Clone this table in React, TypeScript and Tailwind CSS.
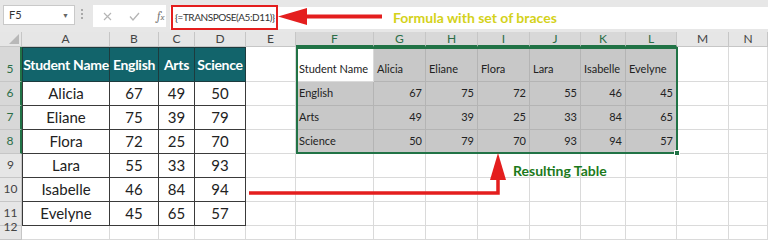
const font = { fontFamily: 'Lato, "Open Sans", sans-serif' };

const colLetters = ['A', 'B', 'C', 'D', 'E', 'F', 'G', 'H', 'I', 'J', 'K', 'L', 'M', 'N'];
const rowNums = [5, 6, 7, 8, 9, 10, 11, 12];

const students = [
  ['Alicia', '67', '49', '50'],
  ['Eliane', '75', '39', '79'],
  ['Flora', '72', '25', '70'],
  ['Lara', '55', '33', '93'],
  ['Isabelle', '46', '84', '94'],
  ['Evelyne', '45', '65', '57'],
];

const transposed = [
  ['Student Name', 'Alicia', 'Eliane', 'Flora', 'Lara', 'Isabelle', 'Evelyne'],
  ['English', '67', '75', '72', '55', '46', '45'],
  ['Arts', '49', '39', '25', '33', '84', '65'],
  ['Science', '50', '79', '70', '93', '94', '57'],
];

function cellFor(r: number, c: number) {
  // r: 0 = row 5, c: 0 = col A
  const base = 'border-r border-b border-[#dadada] overflow-hidden whitespace-nowrap';
  if (c <= 3 && r <= 6) {
    if (r === 0) {
      const heads = ['Student Name', 'English', 'Arts', 'Science'];
      return (
        <div
          className={`bg-[#12646b] text-white font-bold text-[14px] tracking-[-0.3px] whitespace-nowrap flex items-center justify-center border-r border-b border-[#1d3b3e] ${c === 0 ? 'border-l' : ''} border-t`}
        >
          {heads[c]}
        </div>
      );
    }
    const s = students[r - 1];
    return (
      <div
        className={`bg-white text-[#222] text-[15px] whitespace-nowrap flex items-center justify-center border-r border-b border-[#3a3a3a] ${c === 0 ? 'border-l' : ''}`}
      >
        {s[c]}
      </div>
    );
  }
  if (c >= 5 && c <= 11 && r <= 3) {
    const v = transposed[r][c - 5];
    const isNum = r > 0 && c > 5;
    const white = r === 0 && c === 5;
    return (
      <div
        className={`${white ? 'bg-white' : 'bg-[#c8c8c8]'} border-r border-b ${white ? 'border-[#dadada]' : 'border-[#b4b4b4]'} text-[#222] text-[11px] flex items-end pb-[4px] px-[3px] ${isNum ? 'justify-end' : 'justify-start'} whitespace-nowrap overflow-hidden`}
      >
        {v}
      </div>
    );
  }
  return <div className={`bg-white ${base}`} />;
}

export default function App() {
  return (
    <div className="relative w-[768px] h-[240px] overflow-hidden bg-white" style={font}>
      {/* formula bar */}
      <div className="h-[32px] bg-[#e7e7e7] flex items-start">
        <div className="ml-[3px] mt-[5px] w-[72px] h-[20px] bg-white border border-[#c9c9c9] flex items-center justify-between px-[5px] text-[11px] text-[#333]">
          <span>F5</span>
          <span className="text-[7px] text-[#666]">▼</span>
        </div>
        <div className="ml-[6px] mt-[9px] flex flex-col gap-[2px]">
          <span className="w-[2px] h-[2px] bg-[#a9a9a9]" />
          <span className="w-[2px] h-[2px] bg-[#a9a9a9]" />
          <span className="w-[2px] h-[2px] bg-[#a9a9a9]" />
        </div>
        <div className="ml-[10px] mt-[5px] w-[73px] h-[22px] bg-white flex items-center gap-[17px] pl-[10px] text-[#b0b0b0]">
          <svg width="9" height="9" viewBox="0 0 9 9" stroke="#b5b5b5" strokeWidth="1.2">
            <path d="M1 1L8 8M8 1L1 8" />
          </svg>
          <svg width="11" height="9" viewBox="0 0 11 9" fill="none" stroke="#b5b5b5" strokeWidth="1.3">
            <path d="M1 4.5L4 8L10 1" />
          </svg>
          <span className="italic text-[12px] text-[#777] font-serif">
            f<span className="text-[9px]">x</span>
          </span>
        </div>
        <div className="ml-[4px] mt-[7px] flex-1 h-[22px] bg-white flex items-center">
          <div className="ml-[1px] h-[25px] w-[107px] border-2 border-[#e41e1e] flex items-center pl-[2px] text-[10px] tracking-[-0.45px] text-[#333] -mt-[1px] whitespace-nowrap">
            {'{=TRANSPOSE(A5:D11)}'}
          </div>
        </div>
      </div>

      {/* sheet grid */}
      <div className="grid grid-cols-[22px_88px_49px_36px_51px_50px_78px_52px_52px_52px_51px_45px_51px_52px_1fr] grid-rows-[15px_35px_24px_24px_24px_24px_24px_24px_14px]">
        <div className="bg-[#e6e6e6] border-r border-b border-[#c6c6c6] flex items-end justify-end p-[2px]">
          <div className="w-0 h-0 border-l-[10px] border-l-transparent border-b-[10px] border-b-[#b8b8b8]" />
        </div>
        {colLetters.map((l, i) => {
          const sel = i >= 5 && i <= 11;
          return (
            <div
              key={l}
              className={`${sel ? 'bg-[#d8d8d8] border-b-2 border-b-[#217346] text-[#2b6e47]' : 'bg-[#e6e6e6] border-b border-b-[#c6c6c6] text-[#444]'} border-r border-r-[#c6c6c6] text-[12px] flex items-center justify-center`}
            >
              {l}
            </div>
          );
        })}
        {rowNums.map((n, r) => {
          const sel = r <= 3;
          return [
            <div
              key={`h${n}`}
              className={`${sel ? 'bg-[#d8d8d8] text-[#2b6e47] border-r-2 border-r-[#217346]' : 'bg-[#e6e6e6] text-[#444] border-r border-r-[#c6c6c6]'} border-b border-b-[#c6c6c6] text-[12px] flex items-end justify-center pb-[3px]`}
            >
              {n}
            </div>,
            ...colLetters.map((_, c) => (
              <div key={`${n}-${c}`} className="contents">
                {cellFor(r, c)}
              </div>
            )),
          ];
        })}
      </div>

      {/* selection outline */}
      <div className="absolute left-[296px] top-[47px] w-[382px] h-[107px] border-2 border-[#217346] pointer-events-none">
        <div className="absolute -right-[4px] -bottom-[4px] w-[6px] h-[6px] bg-[#217346] border border-white" />
      </div>

      {/* top annotation */}
      <svg className="absolute left-[276px] top-[6px]" width="112" height="22" viewBox="0 0 112 22">
        <path d="M31 8.5H106V12.5H31Z" fill="#e41e1e" />
        <path d="M2 10.5L31 2V19Z" fill="#e41e1e" />
      </svg>
      <div className="absolute left-[393px] top-[7px] text-[14px] font-bold text-[#d4d21a]">
        Formula with set of braces
      </div>

      {/* bottom annotation */}
      <svg className="absolute left-[246px] top-[150px]" width="270" height="50" viewBox="0 0 270 50">
        <path d="M3 43H252V26" fill="none" stroke="#e41e1e" strokeWidth="3.5" />
        <path d="M252 3L244 30H260Z" fill="#e41e1e" />
      </svg>
      <div className="absolute left-[513px] top-[160px] text-[14px] font-bold text-[#1b7a1b]">
        Resulting Table
      </div>
    </div>
  );
}
